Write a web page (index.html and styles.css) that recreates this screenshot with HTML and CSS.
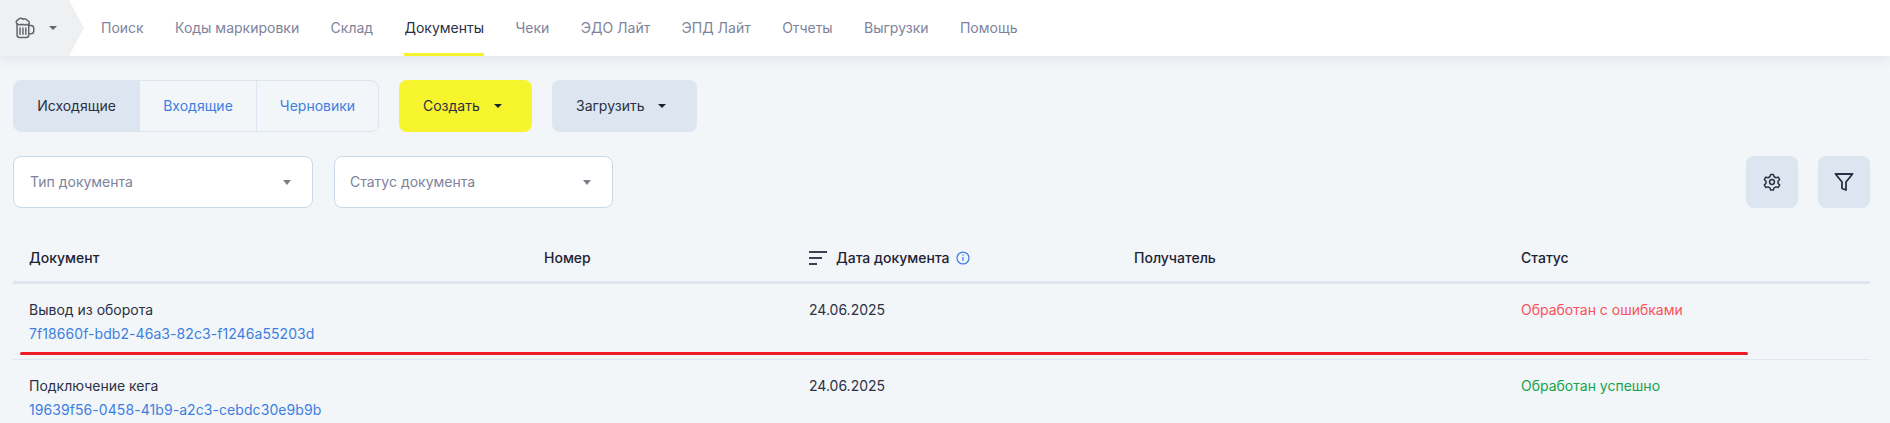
FILE: index.html
```html
<!DOCTYPE html>
<html lang="ru">
<head>
<meta charset="utf-8">
<title>Документы</title>
<link rel="stylesheet" href="styles.css">
</head>
<body>
<header class="topbar">
  <div class="brand">
    <svg class="mug" width="20" height="22" viewBox="0 0 24 26" fill="none" stroke="#63676d" stroke-width="1.800" stroke-linecap="round" stroke-linejoin="round">
      <path d="M2.500 8v13.500A3 3 0 0 0 5.500 24.500h8a3 3 0 0 0 3-3V8"/>
      <path d="M2.500 8C.6 6.500 1.500 3.500 3.800 3.300 4.800 1 8.300.8 9.500 2.600c1.800-1.200 4.500-.6 5.300 1.300 2.200.4 2.700 3.200 1.700 4.600-.8 1-2.300 1-3.200.1-.6 1.200-2.400 1.200-3 0-.8.800-2.200.8-3-.2-.8 1-3.400 1-4.800-.4z"/>
      <path d="M6 13v7.500M9.500 13v7.500M13 13v7.500"/>
      <path d="M16.500 10h2.700a3.300 3.300 0 0 1 3.300 3.300v3.400a3.300 3.300 0 0 1-3.300 3.300h-2.700"/>
    </svg>
    <span class="caret caret-brand"></span>
  </div>
  <nav class="nav">
    <a class="nav-item">Поиск</a>
    <a class="nav-item">Коды маркировки</a>
    <a class="nav-item">Склад</a>
    <a class="nav-item active">Документы</a>
    <a class="nav-item">Чеки</a>
    <a class="nav-item">ЭДО Лайт</a>
    <a class="nav-item">ЭПД Лайт</a>
    <a class="nav-item">Отчеты</a>
    <a class="nav-item">Выгрузки</a>
    <a class="nav-item">Помощь</a>
  </nav>
</header>

<main class="content">
  <div class="toolbar">
    <div class="tabs">
      <button class="tab tab-on">Исходящие</button>
      <button class="tab">Входящие</button>
      <button class="tab">Черновики</button>
    </div>
    <button class="btn btn-yellow">Создать <span class="caret"></span></button>
    <button class="btn btn-blue">Загрузить <span class="caret"></span></button>
  </div>

  <div class="filters">
    <div class="select select-type"><span>Тип документа</span><span class="caret caret-gray"></span></div>
    <div class="select select-status"><span>Статус документа</span><span class="caret caret-gray"></span></div>
    <div class="filter-actions">
      <button class="icon-btn" aria-label="Настройки">
        <svg width="18" height="18" viewBox="0 0 24 24" fill="none" stroke="#2b3044" stroke-width="2" stroke-linejoin="round">
          <path d="M10.200 2h3.600l1 3 2.500 1.300 3-.8 1.900 3.200-2.200 2.300v2.800l2.200 2.300-1.900 3.200-3-.8-2.500 1.300-1 3h-3.600l-1-3-2.500-1.300-3 .8-1.900-3.200 2.200-2.300v-2.800L1.800 8.700l1.900-3.200 3 .8 2.500-1.300z"/>
          <circle cx="12" cy="12" r="3.200"/>
        </svg>
      </button>
      <button class="icon-btn" aria-label="Фильтр">
        <svg width="20" height="20" viewBox="0 0 20 20" fill="none" stroke="#2b3044" stroke-width="1.800" stroke-linejoin="round">
          <path d="M1.500 2h17l-6.500 8v8l-4-1.500V10z"/>
        </svg>
      </button>
    </div>
  </div>

  <section class="table">
    <div class="row head">
      <div>Документ</div>
      <div>Номер</div>
      <div class="date-head">
        <svg class="sort" width="18" height="14" viewBox="0 0 18 14" fill="#3c4254"><rect y="0" width="18" height="2"/><rect y="6" width="13" height="2"/><rect y="12" width="8" height="2"/></svg>
        <span>Дата документа</span>
        <svg width="14" height="14" viewBox="0 0 15 15" fill="none" stroke="#3d7fe0" stroke-width="1.300"><circle cx="7.500" cy="7.500" r="6.400"/><path d="M7.500 6.500v4.300M7.500 3.800v1.300"/></svg>
      </div>
      <div>Получатель</div>
      <div>Статус</div>
    </div>
    <div class="row item">
      <div class="doc"><div>Вывод из оборота</div><a class="doc-id">7f18660f-bdb2-46a3-82c3-f1246a55203d</a></div>
      <div></div>
      <div>24.06.2025</div>
      <div></div>
      <div class="st-err">Обработан с ошибками</div>
    </div>
    <div class="row item">
      <div class="doc"><div>Подключение кега</div><a class="doc-id">19639f56-0458-41b9-a2c3-cebdc30e9b9b</a></div>
      <div></div>
      <div>24.06.2025</div>
      <div></div>
      <div class="st-ok">Обработан успешно</div>
    </div>
  </section>
</main>
<div class="annotation"></div>
</body>
</html>
```
FILE: styles.css
```css
* { box-sizing: border-box; }
html, body { height: 100%; }
body {
  margin: 0;
  overflow: hidden;
  position: relative;
  background: #f2f6f9;
  color: #2b3044;
  font-family: Inter, "Noto Sans", sans-serif;
  font-size: 14px;
  line-height: 20px;
}
button { font: inherit; border: 0; cursor: pointer; }

.topbar {
  display: flex;
  height: 56px;
  background: #fff;
  box-shadow: 0 2px 12px rgba(60, 70, 90, .10);
  position: relative;
}
.brand {
  width: 84px;
  flex: none;
  display: flex;
  align-items: center;
  gap: 14px;
  padding-left: 15px;
  background: #eef0f2;
  clip-path: polygon(0 0, 69px 0, 84px 28px, 69px 56px, 0 56px);
}
.mug { flex: none; }
.caret {
  display: inline-block;
  width: 0;
  height: 0;
  border-left: 4px solid transparent;
  border-right: 4px solid transparent;
  border-top: 4px solid #1e2233;
}
.caret-brand { border-top-color: #63676d; }
.caret-gray { border-left-width: 4.500px; border-right-width: 4.500px; border-top: 5px solid #7c7f8a; }

.nav { display: flex; gap: 31.4px; padding-left: 17px; }
.nav-item {
  display: flex;
  align-items: center;
  color: #7d839c;
}
.nav-item.active {
  color: #2b3044;
  border-bottom: 3px solid #f6f42c;
  padding-top: 3px;
}

.content { padding: 24px 20px 0 13px; }
.toolbar { display: flex; gap: 20px; height: 52px; }
.tabs {
  display: flex;
  width: 366px;
  border: 1px solid #dce5f0;
  border-radius: 8px;
  overflow: hidden;
}
.tab {
  background: none;
  color: #3d7fe0;
  padding: 0;
  border-left: 1px solid #dce5f0;
}
.tab:nth-child(1) { width: 125px; border-left: 0; }
.tab:nth-child(2) { width: 117px; }
.tab:nth-child(3) { flex: 1; }
.tab-on { background: #dce5f0; color: #2b3044; }
.btn {
  display: flex;
  align-items: center;
  gap: 14px;
  padding: 0 0 0 24px;
  border-radius: 8px;
  color: #2b3044;
}
.btn-yellow { width: 133px; background: #f6f42c; }
.btn-blue { width: 145px; background: #dce5f0; }

.filters { display: flex; margin-top: 24px; height: 52px; }
.select {
  display: flex;
  align-items: center;
  justify-content: space-between;
  background: #fff;
  border: 1px solid #cbd8e6;
  border-radius: 8px;
  padding: 0 21px 0 16px;
  color: #7d839c;
}
.select-type { width: 300px; margin-right: 21px; }
.select-status { width: 279px; padding-left: 15px; }
.filter-actions { display: flex; gap: 20px; margin-left: auto; }
.icon-btn {
  width: 52px;
  height: 52px;
  border-radius: 8px;
  background: #dce5f0;
  padding: 0;
  display: flex;
  align-items: center;
  justify-content: center;
}

.table { margin-top: 26px; }
.row {
  display: grid;
  grid-template-columns: 515px 265px 325px 387px 1fr;
  padding-left: 16px;
}
.head {
  color: #1e2233;
  font-weight: 450;
  height: 50px;
  padding-top: 14px;
  border-bottom: 3px solid #dce5f0;
}
.date-head { display: flex; align-items: center; gap: 9px; height: 20px; }
.date-head span { margin-right: -3px; }
.item {
  height: 76px;
  padding-top: 16px;
  border-bottom: 1px solid #dfe6ef;
}
.doc-id { display: block; margin-top: 4px; color: #3d7fe0; letter-spacing: .07px; }
.st-err { color: #f8525a; }
.st-ok { color: #16a34a; }

.annotation {
  position: absolute;
  left: 20px;
  top: 352px;
  width: 1728px;
  height: 3px;
  border-radius: 2px;
  background: #ee1c25;
}
```
